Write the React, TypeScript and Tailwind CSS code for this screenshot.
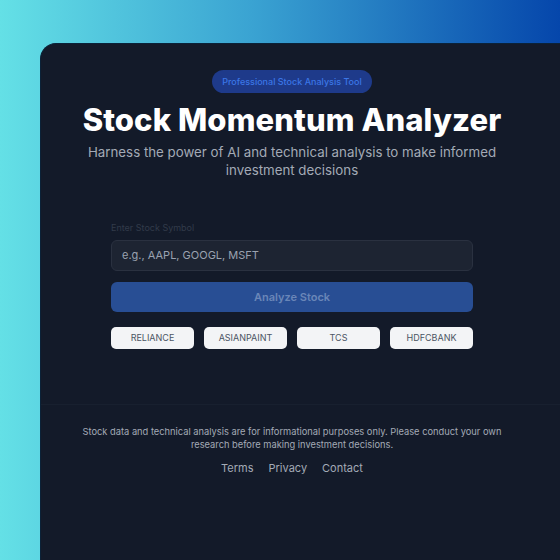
import React from "react";

const font = { fontFamily: "Inter, 'Open Sans', sans-serif" };

export default function App() {
  const chips = ["RELIANCE", "ASIANPAINT", "TCS", "HDFCBANK"];
  return (
    <div
      className="w-[560px] h-[560px] overflow-hidden bg-[linear-gradient(90deg,#64e0e6_0%,#3aa3d2_45%,#0546ab_100%)] pt-[43px] pl-[40px]"
      style={font}
    >
      <div className="w-[560px] h-[560px] bg-[#131a29] rounded-tl-[16px] border-l border-t border-[#0b2238] flex flex-col">
        <div className="w-[502px] flex flex-col items-center pt-[26px]">
          <div className="h-[23px] px-[10px] rounded-full bg-[#1e3a8a] flex items-center text-[9px] text-[#3b76e6] font-medium">
            Professional Stock Analysis Tool
          </div>
          <h1 className="mt-[7px] text-[31px] leading-[40px] font-extrabold text-white tracking-[0.1px]">
            Stock Momentum Analyzer
          </h1>
          <p className="mt-[3px] w-[420px] text-center text-[13.3px] leading-[18px] text-[#a3aab6]">
            Harness the power of AI and technical analysis to make informed investment decisions
          </p>
          <div className="mt-[43px] w-[362px] flex flex-col">
            <label className="text-[9px] leading-[12px] text-[#323a4a]">Enter Stock Symbol</label>
            <div className="mt-[6px] h-[31px] rounded-[6px] bg-[#1d2432] border border-[#2a3140] flex items-center px-[10px] text-[11px] text-[#9aa2b0]">
              e.g., AAPL, GOOGL, MSFT
            </div>
            <button className="mt-[11px] h-[30px] rounded-[6px] bg-[#284e94] text-[11px] font-semibold text-[#6a86b8]">
              Analyze Stock
            </button>
            <div className="mt-[15px] grid grid-cols-4 gap-[10px]">
              {chips.map((c) => (
                <div
                  key={c}
                  className="h-[22px] rounded-[5px] bg-[#f3f4f6] flex items-center justify-center text-[9px] text-[#4b5563]"
                >
                  {c}
                </div>
              ))}
            </div>
          </div>
        </div>
        <div className="mt-[55px] border-t border-[#18202f]">
          <div className="w-[502px] flex flex-col items-center pt-[21px]">
            <p className="w-[440px] text-center text-[9.3px] leading-[12.5px] text-[#a3aab6]">
              Stock data and technical analysis are for informational purposes only. Please conduct your own research before making investment decisions.
            </p>
            <div className="mt-[9px] flex gap-[15px] text-[11px] text-[#a3aab6]">
              <span>Terms</span>
              <span>Privacy</span>
              <span>Contact</span>
            </div>
          </div>
        </div>
      </div>
    </div>
  );
}
